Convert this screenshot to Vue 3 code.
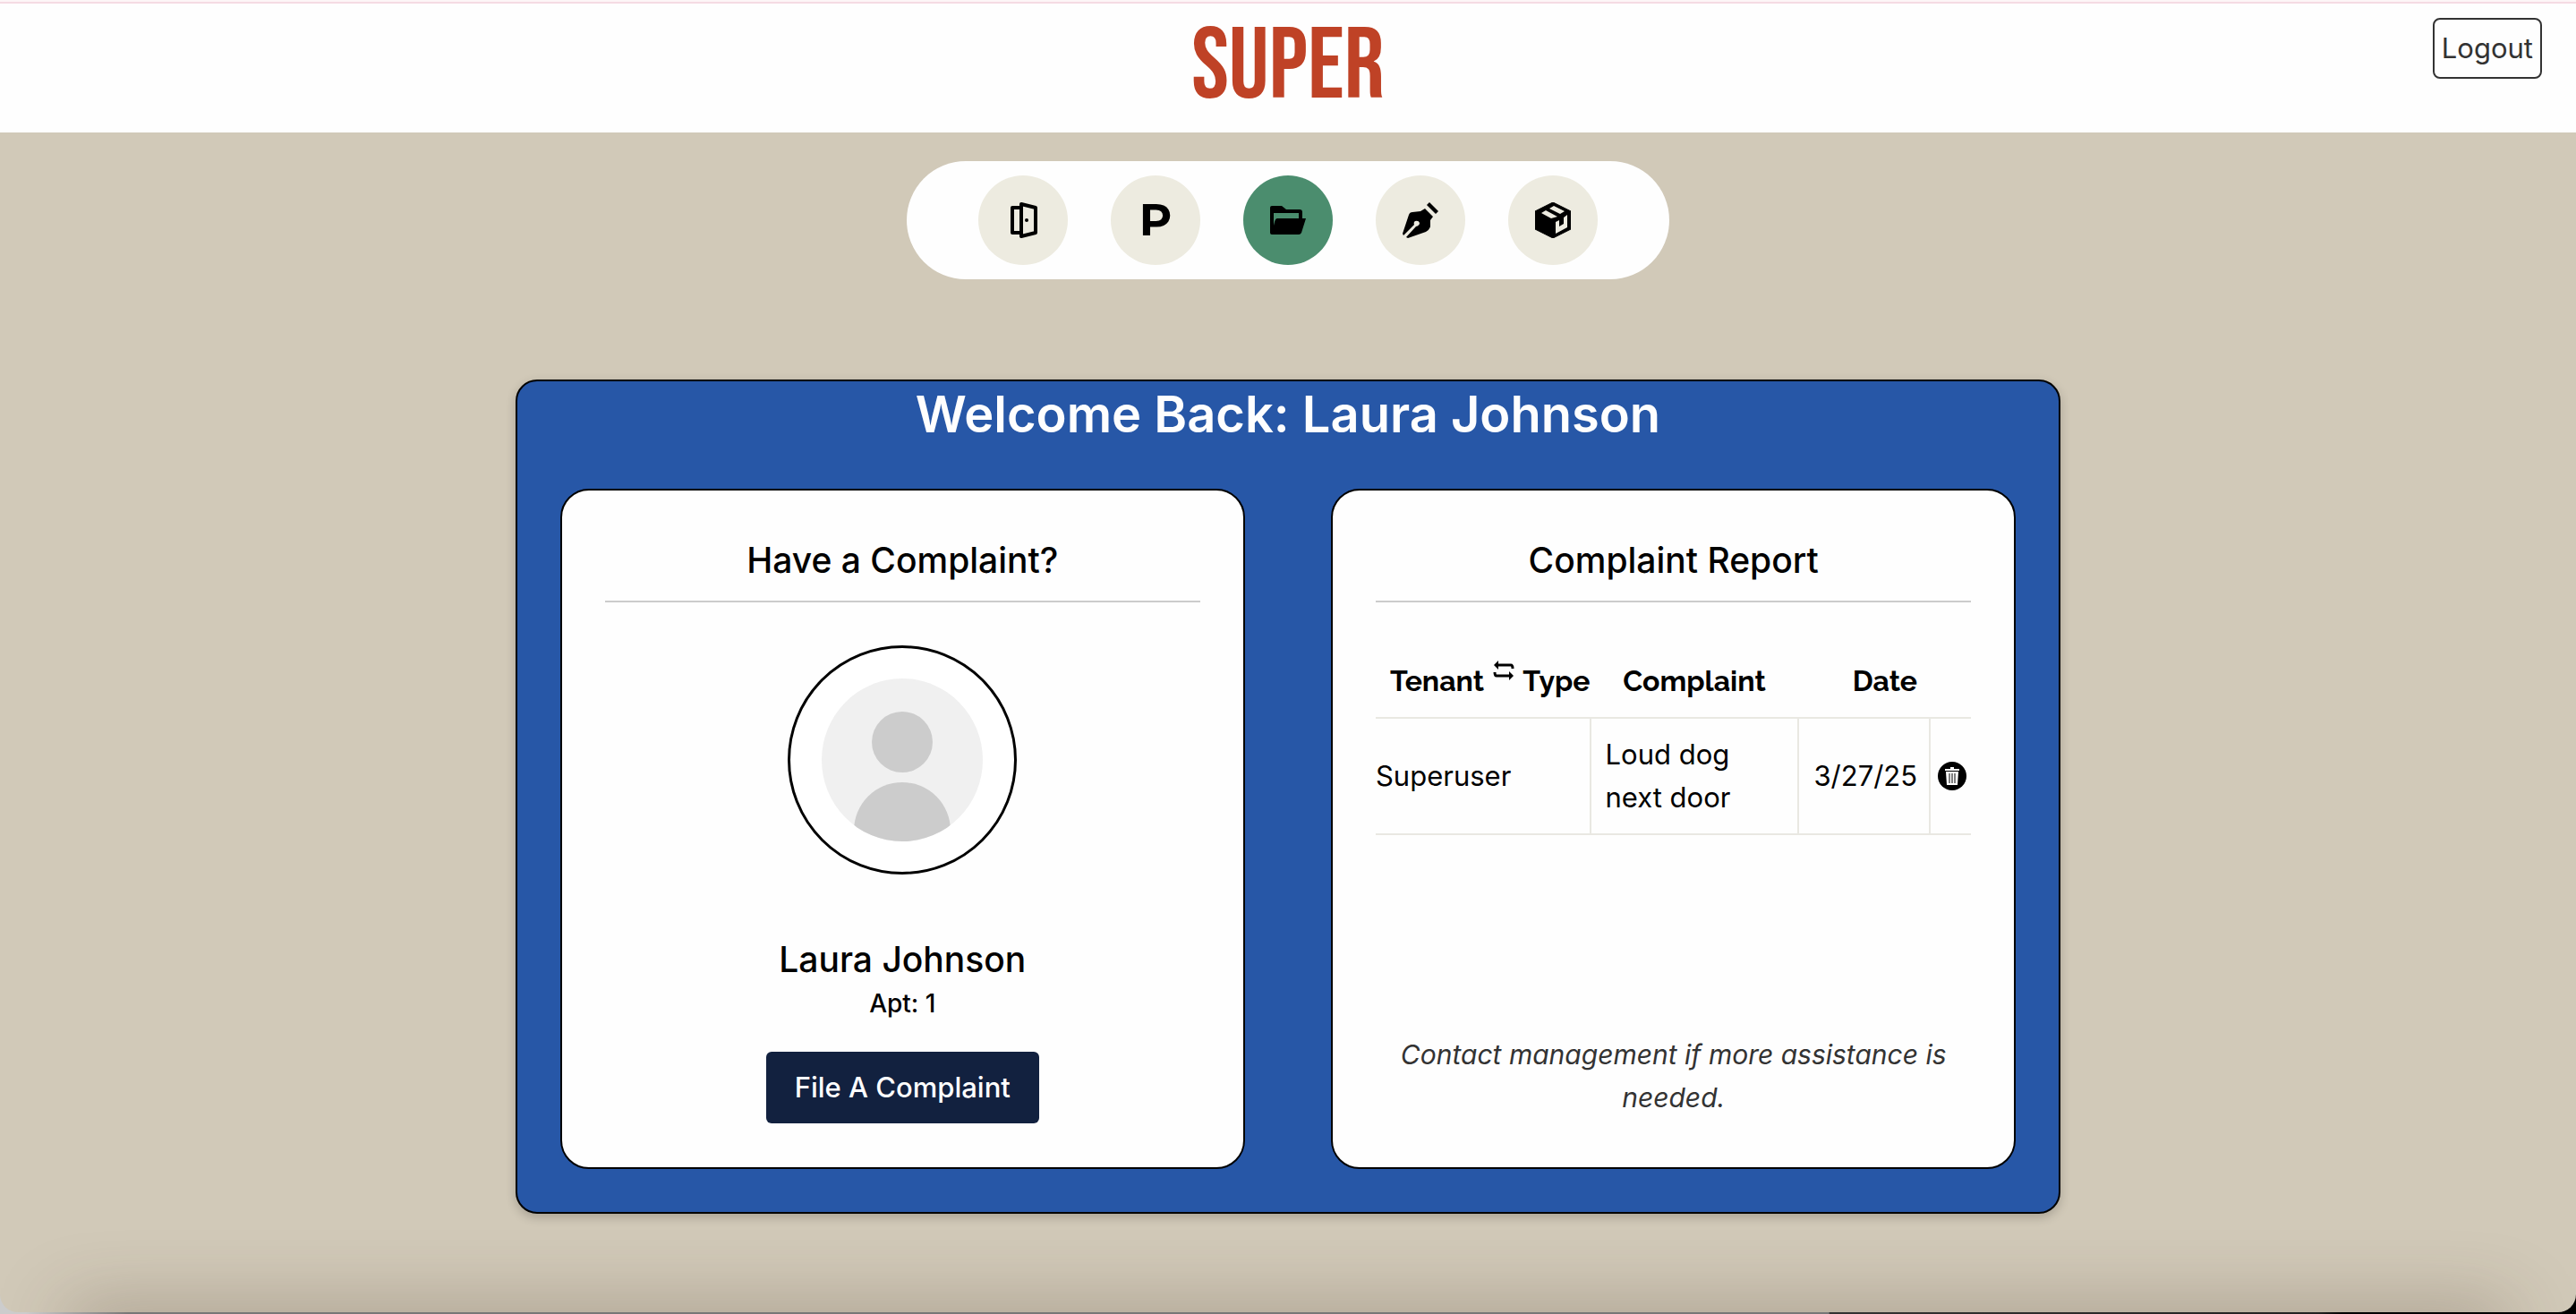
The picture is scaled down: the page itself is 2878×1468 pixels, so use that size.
<script setup>
import { ref } from 'vue'

const navItems = [
  { id: 'door', label: 'Door' },
  { id: 'parking', label: 'Parking' },
  { id: 'complaints', label: 'Complaints' },
  { id: 'lease', label: 'Lease' },
  { id: 'packages', label: 'Packages' },
]
const active = ref('complaints')

const complaints = [
  { id: 1, type: 'Superuser', text: 'Loud dog next door', date: '3/27/25' },
]
</script>

<template>
  <div class="page">
    <header class="topbar">
      <div class="side"></div>
      <a class="logo" href="#">SUPER</a>
      <div class="side end">
        <button class="logout" type="button">Logout</button>
      </div>
    </header>

    <main class="main">
      <nav class="nav">
        <button
          v-for="item in navItems"
          :key="item.id"
          type="button"
          class="nav-item"
          :class="{ active: item.id === active }"
          :aria-label="item.label"
          @click="active = item.id"
        >
          <svg v-if="item.id === 'door'" class="icon" viewBox="0 0 40 40" fill="none" stroke="#000" stroke-width="4" stroke-linejoin="round">
            <path d="M18 6H8V34H18" />
            <path d="M18 2L34 6V34L18 38Z" />
            <circle cx="24" cy="20" r="2" fill="#000" stroke="none" />
          </svg>
          <span v-else-if="item.id === 'parking'" class="letter">P</span>
          <svg v-else-if="item.id === 'complaints'" class="icon" viewBox="0 0 40 40">
            <path d="M2 4H13L18 8H33Q36 8 36 11V18H40L35 34Q34 36 32 36H2Q0 36 0 34V6Q0 4 2 4Z" />
            <path d="M4 12H32V18H8Q6 18 5 22L4 26Z" fill="#4b8d6e" />
          </svg>
          <svg v-else-if="item.id === 'lease'" class="icon" viewBox="0 0 40 40">
            <path d="M30 0L40 10L37 13L27 3Z" />
            <path d="M25 7L34 16L31 20V27Q30 31 26 33L6 40L4 39L15 27Q19 26 19 23Q18 20 14 21Q12 22 13 25L1 37L0 35L7 14Q8 11 11 11L20 10Z" />
          </svg>
          <svg v-else class="icon" viewBox="0 0 40 40">
            <path d="M20 0L40 10V30L20 40L0 30V10Z" stroke="#000" stroke-linejoin="round" />
            <path d="M7 12L12 9L25 16L18 18ZM16 7L21 4L33 10L28 13ZM23 22L27 20V27L32 24V17L36 14V28L23 35Z" fill="#edebe0" />
          </svg>
        </button>
      </nav>

      <section class="panel">
        <h1 class="welcome">Welcome Back: Laura Johnson</h1>
        <div class="cards">
          <article class="card">
            <h2 class="card-title">Have a Complaint?</h2>
            <div class="avatar">
              <svg viewBox="0 0 180 182" role="img" aria-label="Profile picture">
                <defs>
                  <clipPath id="face"><ellipse cx="90" cy="91" rx="90" ry="91" /></clipPath>
                </defs>
                <g clip-path="url(#face)">
                  <rect width="180" height="182" fill="#f0f0f0" />
                  <circle cx="90" cy="71" r="34" fill="#ccc" />
                  <path d="M36 182V170A54 54 0 0 1 144 170V182Z" fill="#ccc" />
                </g>
              </svg>
            </div>
            <p class="name">Laura Johnson</p>
            <p class="apt">Apt: 1</p>
            <button class="file" type="button">File A Complaint</button>
          </article>

          <article class="card">
            <h2 class="card-title">Complaint Report</h2>
            <table class="report">
              <colgroup>
                <col class="c-type" />
                <col class="c-text" />
                <col class="c-date" />
                <col class="c-del" />
              </colgroup>
              <thead>
                <tr>
                  <th class="lead">
                    <div class="type-head">
                      <span>Tenant</span>
                      <button class="swap" type="button" aria-label="Switch tenant and type">
                        <svg viewBox="0 0 24 24" width="24" height="24" fill="none" stroke="#000" stroke-width="3">
                          <path d="M4 6H20Q22 6 22 10" />
                          <path d="M6 1L1 6L6 11Z" fill="#000" stroke="none" />
                          <path d="M2 14Q2 18 4 18H20" />
                          <path d="M18 13L23 18L18 23Z" fill="#000" stroke="none" />
                        </svg>
                      </button>
                      <span>Type</span>
                    </div>
                  </th>
                  <th>Complaint</th>
                  <th colspan="2">Date</th>
                </tr>
              </thead>
              <tbody>
                <tr v-for="row in complaints" :key="row.id">
                  <td class="first">{{ row.type }}</td>
                  <td>{{ row.text }}</td>
                  <td>{{ row.date }}</td>
                  <td class="actions">
                    <button class="delete" type="button" aria-label="Delete complaint">
                      <svg viewBox="0 0 32 32" width="32" height="32">
                        <circle cx="16" cy="16" r="16" />
                        <path d="M8 8H14V6H18V8H24V10H8ZM9 11H23L22 26H10Z" fill="#fff" />
                        <path d="M13 13V24M16 13V24M19 13V24" stroke="#000" stroke-width="1" />
                      </svg>
                    </button>
                  </td>
                </tr>
              </tbody>
            </table>
            <p class="note">Contact management if more assistance is needed.</p>
          </article>
        </div>
      </section>
    </main>
    <div class="dock-shade"></div>
  </div>
</template>

<style>
body {
  margin: 0;
  background: linear-gradient(90deg, #ccc 1%, #777 5%, #777 71%, #333 71%, #222 90%, #000 91%);
}
</style>

<style scoped>
* {
  box-sizing: border-box;
}
button {
  padding: 0;
  border: 0;
  background: none;
  font: inherit;
  color: inherit;
  cursor: pointer;
}
.page {
  display: flex;
  flex-direction: column;
  position: relative;
  min-height: calc(100vh - 2px);
  overflow: hidden;
  border-radius: 0 0 20px 20px;
  background: #d1c9b8;
  color: #000;
  font-family: Inter, "Liberation Sans", sans-serif;
  font-size: 31px;
  line-height: 48px;
}
.topbar {
  display: flex;
  align-items: flex-start;
  height: 148px;
  padding: 18px 38px 0;
  border-top: 2px solid #fdf5f7;
  background: #fefefe;
  box-shadow: inset 0 2px #f5dbe3;
}
.side {
  flex: 1;
}
.end {
  display: flex;
  justify-content: flex-end;
}
.logo {
  color: #bf4226;
  font-family: "Bebas Neue", "Open Sans Condensed", "Roboto Condensed", "Liberation Sans Narrow", "DejaVu Sans Condensed", sans-serif;
  font-weight: 400;
  font-size: 112px;
  line-height: 112px;
  text-decoration: none;
}
.logout {
  height: 68px;
  padding: 0 8px;
  border: 2px solid #333;
  border-radius: 8px;
  color: #333;
}
.main {
  display: flex;
  flex-direction: column;
  align-items: center;
  padding: 32px 0 110px;
}
.nav {
  display: flex;
  gap: 48px;
  padding: 16px 80px;
  border-radius: 66px;
  background: #fefefe;
}
.nav-item {
  display: flex;
  align-items: center;
  justify-content: center;
  width: 100px;
  height: 100px;
  border-radius: 50%;
  background: #edebe0;
}
.nav-item.active {
  background: #4b8d6e;
}
.icon {
  width: 40px;
  height: 40px;
}
.letter {
  font-family: Montserrat, Inter, sans-serif;
  font-size: 50px;
  font-weight: 700;
}
.panel {
  width: 60%;
  margin-top: 112px;
  padding: 0 48px 48px;
  border: 2px solid #000;
  border-radius: 24px;
  background: #2757a7;
  box-shadow: 0 4px 12px rgba(0, 0, 0, 0.2);
}
.welcome {
  margin: 0 0 48px;
  color: #fefefe;
  font-size: 56px;
  font-weight: 600;
  line-height: 74px;
  margin-bottom: 46px;
  text-align: center;
}
.cards {
  display: grid;
  grid-template-columns: 1fr 1fr;
  gap: 96px;
}
.card {
  display: flex;
  flex-direction: column;
  align-items: center;
  min-height: 760px;
  padding: 46px 48px;
  border: 2px solid #000;
  border-radius: 32px;
  background: #fefefe;
}
.card-title {
  width: 100%;
  margin: 0 0 48px;
  padding: 5px 0 18px;
  border-bottom: 2px solid #ccc;
  font-size: 39px;
  font-weight: 500;
  line-height: 54px;
  text-align: center;
}
.avatar {
  display: flex;
  align-items: center;
  justify-content: center;
  width: 256px;
  height: 256px;
  border: 3px solid #000;
  border-radius: 50%;
  background: #fff;
}
.avatar svg {
  width: 180px;
  height: 182px;
}
.name {
  margin: 68px 0 0;
  font-size: 39px;
  font-weight: 500;
  line-height: 54px;
}
.apt {
  margin: 0;
  font-size: 28px;
  font-weight: 500;
  line-height: 44px;
}
.file {
  height: 80px;
  margin-top: 32px;
  padding: 0 32px;
  border-radius: 6px;
  background: #12213f;
  color: #fff;
  font-weight: 500;
}
.report {
  width: 100%;
  table-layout: fixed;
  border-collapse: collapse;
}
.c-type {
  width: 36%;
}
.c-text {
  width: 35%;
}
.c-date {
  width: 22%;
}
.c-del {
  width: 7%;
}
th {
  padding: 16px 0;
  border-bottom: 2px solid #e9e8e2;
  font-family: Raleway, Lato, sans-serif;
  font-size: 32px;
  font-weight: 700;
  text-align: center;
}
th.lead {
  padding-left: 16px;
}
.type-head {
  display: flex;
  justify-content: space-between;
}
.swap {
  display: flex;
  height: 24px;
}
td {
  padding: 16px;
  border-bottom: 2px solid #e9e8e2;
  border-left: 2px solid #e9e8e2;
}
td.first {
  padding-left: 0;
  border-left: 0;
}
td.actions {
  padding: 0 8px;
}
.delete {
  display: flex;
}
.note {
  margin: auto 0 0;
  padding-bottom: 8px;
  color: #333;
  font-size: 30px;
  font-style: italic;
  text-align: center;
}
.dock-shade {
  position: absolute;
  right: 80px;
  bottom: -40px;
  left: 80px;
  height: 40px;
  box-shadow: 0 0 80px 4px rgba(70, 50, 35, 0.35);
}
</style>
